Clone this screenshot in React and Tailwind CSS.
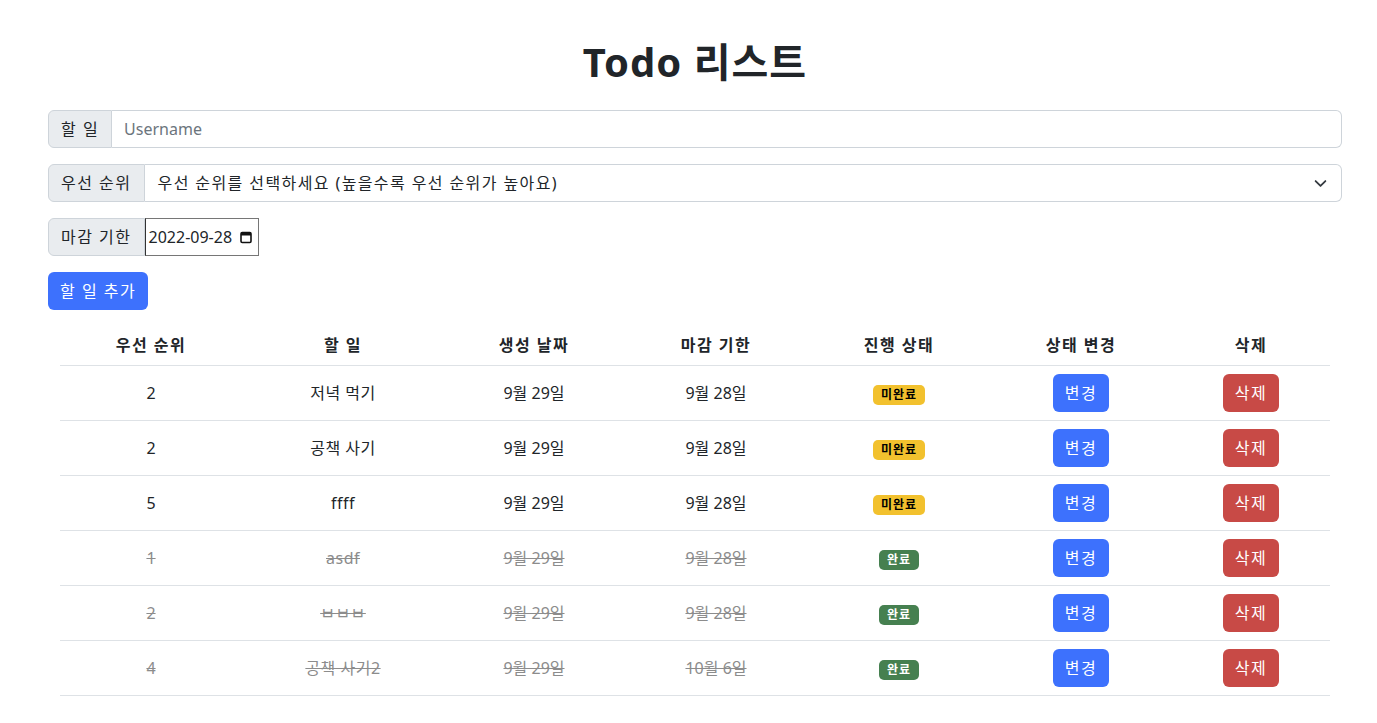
import React from 'react';

const rows = [
  { p: 2, t: '저녁 먹기', c: '9월 29일', d: '9월 28일', done: false },
  { p: 2, t: '공책 사기', c: '9월 29일', d: '9월 28일', done: false },
  { p: 5, t: 'ffff', c: '9월 29일', d: '9월 28일', done: false },
  { p: 1, t: 'asdf', c: '9월 29일', d: '9월 28일', done: true },
  { p: 2, t: 'ㅂㅂㅂ', c: '9월 29일', d: '9월 28일', done: true },
  { p: 4, t: '공책 사기2', c: '9월 29일', d: '10월 6일', done: true },
];

const font = { fontFamily: '"Noto Sans", "Noto Sans CJK KR", sans-serif' };

export default function App() {
  return (
    <div className="min-h-screen bg-white text-[#212529] text-base" style={font}>
      <div className="pl-12 pr-[35px] pt-[38px]">
        <h1 className="text-center text-[40px] font-bold leading-[1.2] mb-6 tracking-[1px]">Todo 리스트</h1>

        {/* 할 일 */}
        <div className="flex h-[38px] mb-4">
          <span className="flex items-center px-3 bg-[#e9ecef] border border-[#ced4da] rounded-l-md tracking-[1.5px]">할 일</span>
          <input
            className="flex-1 px-3 border border-l-0 border-[#ced4da] rounded-r-md outline-none placeholder:text-[#6c757d]"
            placeholder="Username"
          />
        </div>

        {/* 우선 순위 */}
        <div className="flex h-[38px] mb-4">
          <span className="flex items-center px-3 bg-[#e9ecef] border border-[#ced4da] rounded-l-md tracking-[1.5px]">우선 순위</span>
          <div className="flex-1 flex items-center justify-between pl-[13px] pr-[14px] border border-l-0 border-[#ced4da] rounded-r-md">
            <span className="tracking-[1.4px]">우선 순위를 선택하세요 (높을수록 우선 순위가 높아요)</span>
            <svg width="13" height="13" viewBox="0 0 16 16">
              <path d="M2 5l6 6 6-6" fill="none" stroke="#343a40" strokeWidth="2.2" strokeLinecap="round" strokeLinejoin="round" />
            </svg>
          </div>
        </div>

        {/* 마감 기한 */}
        <div className="flex h-[38px] mb-4">
          <span className="flex items-center px-3 bg-[#e9ecef] border border-[#ced4da] rounded-l-md tracking-[1.5px]">마감 기한</span>
          <div className="flex items-center w-[114px] pl-[3px] pr-[5px] border border-[#767676] border-l-[#333] justify-between">
            <span>2022-09-28</span>
            <svg width="14" height="14" viewBox="0 0 14 14">
              <rect x="2" y="2.5" width="10" height="10" rx="1.2" fill="none" stroke="#111" strokeWidth="1.6" />
              <rect x="2" y="2.5" width="10" height="3" fill="#111" />
            </svg>
          </div>
        </div>

        <button className="h-[38px] px-3 rounded-md bg-[#3d71fd] text-white tracking-[1.5px]">할 일 추가</button>

        <table className="w-[calc(100%-24px)] mx-3 mt-4 border-collapse text-center">
          <colgroup>
            <col className="w-[182px]" />
            <col className="w-[202px]" />
            <col className="w-[180px]" />
            <col className="w-[184px]" />
            <col className="w-[182px]" />
            <col className="w-[182px]" />
            <col />
          </colgroup>
          <thead>
            <tr className="border-b border-[#dee2e6] h-[39px]">
              {['우선 순위', '할 일', '생성 날짜', '마감 기한', '진행 상태', '상태 변경', '삭제'].map(h => (
                <th key={h} className="font-bold align-middle tracking-[1.5px]">{h}</th>
              ))}
            </tr>
          </thead>
          <tbody>
            {rows.map((r, i) => {
              const txt = r.done ? 'line-through text-[#8c8c8c]' : '';
              return (
                <tr key={i} className="border-b border-[#dee2e6] h-[55px]">
                  <td className={txt}>{r.p}</td>
                  <td className={`${txt} tracking-[0.5px]`}>{r.t}</td>
                  <td className={txt}>{r.c}</td>
                  <td className={txt}>{r.d}</td>
                  <td>
                    {r.done ? (
                      <span className="inline-block px-2 py-[3px] rounded-[5px] bg-[#468050] text-white text-xs font-bold leading-[14px] tracking-[1px]">완료</span>
                    ) : (
                      <span className="inline-block px-2 py-[3px] rounded-[5px] bg-[#f2c12e] text-black text-xs font-bold leading-[14px] tracking-[1px]">미완료</span>
                    )}
                  </td>
                  <td>
                    <button className="h-[38px] px-3 rounded-md bg-[#3d71fd] text-white tracking-[1.5px]">변경</button>
                  </td>
                  <td>
                    <button className="h-[38px] px-3 rounded-md bg-[#c84a46] text-white tracking-[1.5px]">삭제</button>
                  </td>
                </tr>
              );
            })}
          </tbody>
        </table>
      </div>
    </div>
  );
}
